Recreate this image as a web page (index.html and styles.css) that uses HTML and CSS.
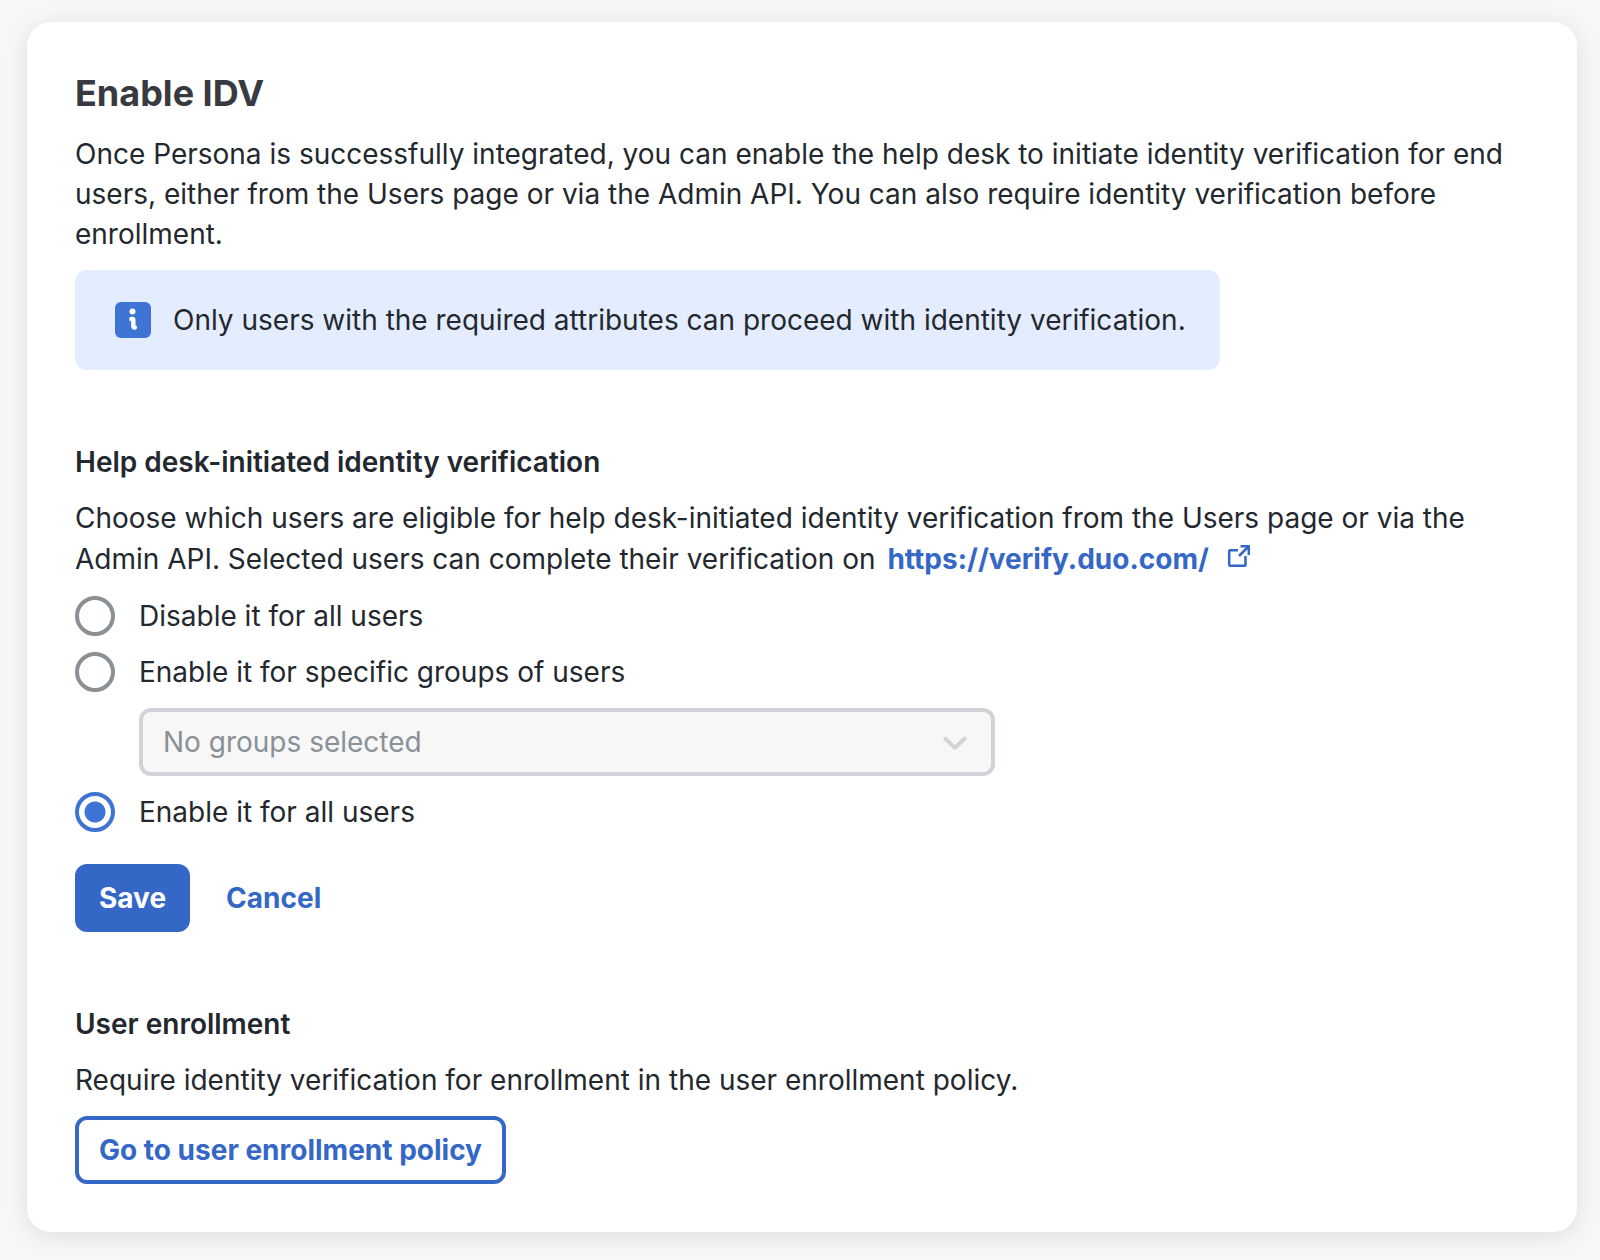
FILE: index.html
```html
<!DOCTYPE html>
<html lang="en">
<head>
    <meta charset="UTF-8">
    <meta name="viewport" content="width=device-width, initial-scale=1.0">
    <title>Enable IDV</title>
    <link rel="stylesheet" href="styles.css">
</head>
<body>
    <main class="card">
        <h1>Enable IDV</h1>
        <p>Once Persona is successfully integrated, you can enable the help desk to initiate identity verification for end users, either from the Users page or via the Admin API. You can also require identity verification before enrollment.</p>

        <!-- Info banner -->
        <div class="notice">
            <svg class="notice-icon" viewBox="0 0 36 36" aria-hidden="true">
                <rect width="36" height="36" rx="6" fill="#3e74d3"/>
                <circle cx="17.500" cy="9.500" r="3" fill="#fff"/>
                <path d="M16.300 17h1q1 0 1 1v5.500q0 2 1.600 2" fill="none" stroke="#fff" stroke-width="4.400" stroke-linecap="round" stroke-linejoin="round"/>
            </svg>
            <span>Only users with the required attributes can proceed with identity verification.</span>
        </div>

        <!-- Help desk settings -->
        <form class="section">
            <h2 id="helpdesk-title">Help desk-initiated identity verification</h2>
            <p>Choose which users are eligible for help desk-initiated identity verification from the Users page or via the Admin API. Selected users can complete their verification on
                <a class="link" href="https://verify.duo.com/">
                    https://verify.duo.com/
                    <svg class="external" viewBox="0 0 24 24" aria-hidden="true">
                        <path d="M11 6.200H3.200q-1 0-1 1v13.600q0 1 1 1h14.300q1 0 1-1V12M13.500 2.200h8.300V11M21.500 2.500L12 12" fill="none" stroke="currentColor" stroke-width="2.500" stroke-linejoin="round"/>
                    </svg>
                </a>
            </p>

            <div class="options" role="radiogroup" aria-labelledby="helpdesk-title">
                <label class="option"><input type="radio" name="idv" value="none">Disable it for all users</label>
                <label class="option"><input type="radio" name="idv" value="groups">Enable it for specific groups of users</label>
                <div class="select">
                    <select aria-label="Groups" disabled>
                        <option>No groups selected</option>
                    </select>
                    <svg class="chevron" viewBox="0 0 24 14" aria-hidden="true">
                        <path d="M2.500 2.700l9.500 9 9.500-9" fill="none" stroke="#d0d4d9" stroke-width="4" stroke-linecap="round" stroke-linejoin="round"/>
                    </svg>
                </div>
                <label class="option"><input type="radio" name="idv" value="all" checked>Enable it for all users</label>
            </div>

            <div class="actions">
                <button type="button" class="btn btn-primary">Save</button>
                <button type="button" class="btn btn-text">Cancel</button>
            </div>
        </form>

        <!-- Enrollment -->
        <section class="section">
            <h2>User enrollment</h2>
            <p>Require identity verification for enrollment in the user enrollment policy.</p>
            <button type="button" class="btn btn-outline">Go to user enrollment policy</button>
        </section>
    </main>
</body>
</html>
```
FILE: styles.css
```css
* {
    box-sizing: border-box;
}
body {
    margin: 0;
    padding: 22px 23px 28px 27px;
    background-color: #f7f7f7;
    color: #23282e;
    font-family: Inter, "Liberation Sans", sans-serif;
    font-size: 28px;
    line-height: 40px;
}
.card {
    padding: 48px;
    border-radius: 24px;
    background-color: #fff;
    box-shadow: 0 4px 24px rgba(0, 0, 0, 0.1);
}
h1, h2, p {
    margin: 0;
}
h1 {
    margin-bottom: 18px;
    color: #373a40;
    font-size: 36px;
    font-weight: 700;
    line-height: 46px;
}
h2 {
    margin-bottom: 16px;
    font-size: 28px;
    font-weight: 600;
}
.notice {
    display: flex;
    align-items: center;
    gap: 22px;
    width: fit-content;
    margin-top: 16px;
    padding: 30px 34px 30px 40px;
    border-radius: 12px;
    background-color: #e4edff;
}
.notice-icon {
    flex: none;
    width: 36px;
    height: 36px;
}
.section {
    margin-top: 72px;
}
.link {
    display: inline-flex;
    align-items: center;
    gap: 18px;
    margin-left: 4px;
    color: #3467c6;
    font-weight: 700;
    line-height: 42px;
    text-decoration: none;
}
.external {
    width: 24px;
    height: 24px;
    margin-bottom: 6px;
}
.options {
    display: flex;
    flex-direction: column;
    gap: 16px;
    margin-top: 16px;
}
.option {
    display: flex;
    align-items: center;
    gap: 24px;
}
.option input {
    appearance: none;
    width: 40px;
    height: 40px;
    margin: 0;
    border: 4px solid #899197;
    border-radius: 50%;
    background-color: #fff;
}
.option input:checked {
    border-color: #3e74d3;
    background: radial-gradient(circle, #3e74d3 10px, #fff 11px);
}
.select {
    position: relative;
    max-width: 856px;
    margin-left: 64px;
}
.select select {
    display: block;
    appearance: none;
    width: 100%;
    height: 68px;
    padding: 0 20px;
    border: 4px solid #d0d4d9;
    border-radius: 12px;
    background-color: #f7f7f7;
    color: #899197;
    font: inherit;
    opacity: 1;
}
.chevron {
    position: absolute;
    top: 28px;
    right: 28px;
    width: 24px;
    height: 14px;
}
.actions {
    display: flex;
    gap: 12px;
    margin-top: 32px;
}
.btn {
    height: 68px;
    padding: 0 20px;
    border: 4px solid transparent;
    border-radius: 12px;
    background-color: transparent;
    color: #3467c6;
    font: inherit;
    font-weight: 700;
}
.btn-primary {
    border-color: #3467c6;
    background-color: #3467c6;
    color: #fff;
}
.btn-outline {
    margin-top: 16px;
    border-color: #3467c6;
}
```
